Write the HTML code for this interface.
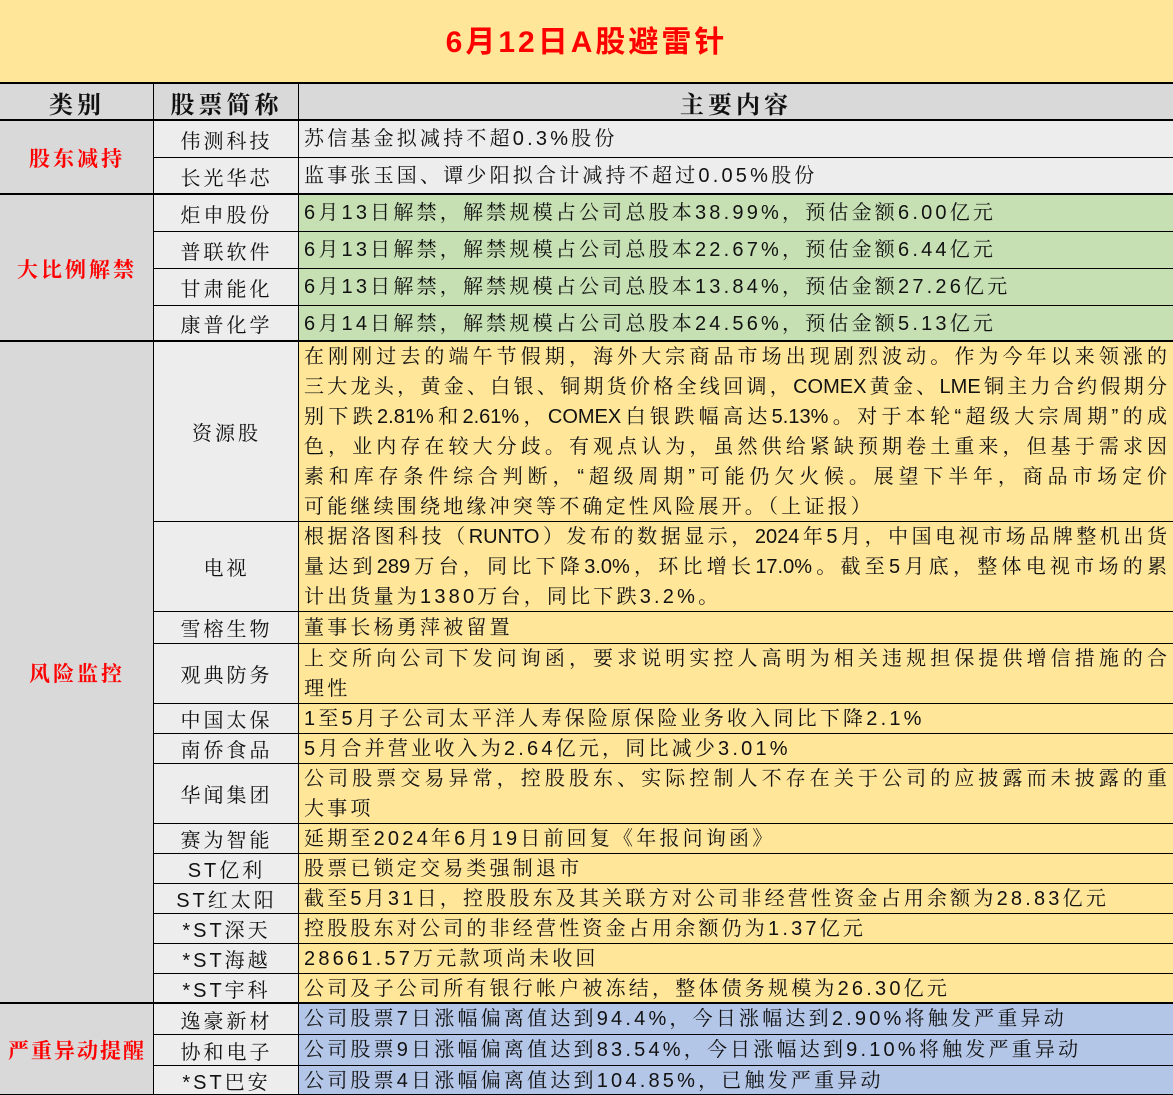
<!DOCTYPE html>
<html><head><meta charset="utf-8"><style>
body{margin:0;width:1173px;height:1095px;position:relative;background:#fff;font-family:"Liberation Sans","Noto Serif CJK SC","Noto Sans CJK SC",sans-serif;color:#111;overflow:hidden}
.c{position:absolute;box-sizing:border-box;border-left:1px solid #000;border-top:1px solid #000;overflow:hidden}
.k{border-top:2px solid #000}
.t{position:absolute;left:0;top:0;width:1173px;height:83px;background:#FFE699;text-align:center;line-height:86px;font-size:30px;font-weight:bold;color:#f00;letter-spacing:3px;font-family:"Liberation Sans","Noto Sans CJK SC",sans-serif}
.h{background:#D9D9D9;font-weight:bold;font-size:24px;text-align:center;letter-spacing:4px;display:flex;align-items:center;justify-content:center}
.cat{background:#D9D9D9;color:#f00;font-weight:bold;font-size:21px;letter-spacing:3px;display:flex;align-items:center;justify-content:center;border-top:2px solid #000}
.nm{background:#EDEDED;font-size:20px;letter-spacing:3px;display:flex;align-items:center;justify-content:center}
.ct{font-size:20px;letter-spacing:3.2px;padding-left:5px;padding-right:6px;display:flex;flex-direction:column;justify-content:center;line-height:30px;white-space:nowrap}
.j{text-align:justify;text-align-last:justify;letter-spacing:0}
.g{background:#EDEDED}.gr{background:#C6E0B4}.y{background:#FFE699}.b{background:#B4C6E7}
.bot{position:absolute;left:0;top:1094px;width:1173px;height:1px;background:#000}
</style></head><body>
<div class="t">6月12日A股避雷针</div>
<div class="c h k" style="left:0;top:82px;width:154px;height:39px;border-left:0">类别</div>
<div class="c h k" style="left:153px;top:82px;width:146px;height:39px">股票简称</div>
<div class="c h k" style="left:298px;top:82px;width:875px;height:39px">主要内容</div>

<div class="c cat" style="left:0;top:119px;width:154px;height:76px;border-left:0">股东减持</div>
<div class="c cat" style="left:0;top:193px;width:154px;height:149px;border-left:0">大比例解禁</div>
<div class="c cat" style="left:0;top:340px;width:154px;height:664px;border-left:0">风险监控</div>
<div class="c cat" style="left:0;top:1002px;width:154px;height:93px;letter-spacing:2px;font-size:21px;border-left:0">严重异动提醒</div>

<div class="c nm k" style="left:153px;top:119px;width:146px;height:38px">伟测科技</div>
<div class="c ct g k" style="left:298px;top:119px;width:875px;height:38px">苏信基金拟减持不超0.3%股份</div>
<div class="c nm" style="left:153px;top:157px;width:146px;height:37px">长光华芯</div>
<div class="c ct g" style="left:298px;top:157px;width:875px;height:37px">监事张玉国、谭少阳拟合计减持不超过0.05%股份</div>

<div class="c nm k" style="left:153px;top:193px;width:146px;height:38px">炬申股份</div>
<div class="c ct gr k" style="left:298px;top:193px;width:875px;height:38px">6月13日解禁，解禁规模占公司总股本38.99%，预估金额6.00亿元</div>
<div class="c nm" style="left:153px;top:231px;width:146px;height:37px">普联软件</div>
<div class="c ct gr" style="left:298px;top:231px;width:875px;height:37px">6月13日解禁，解禁规模占公司总股本22.67%，预估金额6.44亿元</div>
<div class="c nm" style="left:153px;top:268px;width:146px;height:37px">甘肃能化</div>
<div class="c ct gr" style="left:298px;top:268px;width:875px;height:37px">6月13日解禁，解禁规模占公司总股本13.84%，预估金额27.26亿元</div>
<div class="c nm" style="left:153px;top:305px;width:146px;height:36px">康普化学</div>
<div class="c ct gr" style="left:298px;top:305px;width:875px;height:36px">6月14日解禁，解禁规模占公司总股本24.56%，预估金额5.13亿元</div>

<div class="c nm k" style="left:153px;top:340px;width:146px;height:181px">资源股</div>
<div class="c ct y k" style="left:298px;top:340px;width:875px;height:181px">
<div class="j">在刚刚过去的端午节假期，海外大宗商品市场出现剧烈波动。作为今年以来领涨的</div>
<div class="j">三大龙头，黄金、白银、铜期货价格全线回调，COMEX黄金、LME铜主力合约假期分</div>
<div class="j">别下跌2.81%和2.61%，COMEX白银跌幅高达5.13%。对于本轮“超级大宗周期”的成</div>
<div class="j">色，业内存在较大分歧。有观点认为，虽然供给紧缺预期卷土重来，但基于需求因</div>
<div class="j">素和库存条件综合判断，“超级周期”可能仍欠火候。展望下半年，商品市场定价</div>
<div>可能继续围绕地缘冲突等不确定性风险展开。（上证报）</div></div>
<div class="c nm" style="left:153px;top:521px;width:146px;height:90px">电视</div>
<div class="c ct y" style="left:298px;top:521px;width:875px;height:90px">
<div class="j">根据洛图科技（RUNTO）发布的数据显示，2024年5月，中国电视市场品牌整机出货</div>
<div class="j">量达到289万台，同比下降3.0%，环比增长17.0%。截至5月底，整体电视市场的累</div>
<div>计出货量为1380万台，同比下跌3.2%。</div></div>
<div class="c nm" style="left:153px;top:611px;width:146px;height:32px">雪榕生物</div>
<div class="c ct y" style="left:298px;top:611px;width:875px;height:32px">董事长杨勇萍被留置</div>
<div class="c nm" style="left:153px;top:643px;width:146px;height:60px">观典防务</div>
<div class="c ct y" style="left:298px;top:643px;width:875px;height:60px">
<div class="j">上交所向公司下发问询函，要求说明实控人高明为相关违规担保提供增信措施的合</div><div>理性</div></div>
<div class="c nm" style="left:153px;top:703px;width:146px;height:30px">中国太保</div>
<div class="c ct y" style="left:298px;top:703px;width:875px;height:30px">1至5月子公司太平洋人寿保险原保险业务收入同比下降2.1%</div>
<div class="c nm" style="left:153px;top:733px;width:146px;height:30px">南侨食品</div>
<div class="c ct y" style="left:298px;top:733px;width:875px;height:30px">5月合并营业收入为2.64亿元，同比减少3.01%</div>
<div class="c nm" style="left:153px;top:763px;width:146px;height:60px">华闻集团</div>
<div class="c ct y" style="left:298px;top:763px;width:875px;height:60px">
<div class="j">公司股票交易异常，控股股东、实际控制人不存在关于公司的应披露而未披露的重</div><div>大事项</div></div>
<div class="c nm" style="left:153px;top:823px;width:146px;height:30px">赛为智能</div>
<div class="c ct y" style="left:298px;top:823px;width:875px;height:30px">延期至2024年6月19日前回复《年报问询函》</div>
<div class="c nm" style="left:153px;top:853px;width:146px;height:30px">ST亿利</div>
<div class="c ct y" style="left:298px;top:853px;width:875px;height:30px">股票已锁定交易类强制退市</div>
<div class="c nm" style="left:153px;top:883px;width:146px;height:30px">ST红太阳</div>
<div class="c ct y" style="left:298px;top:883px;width:875px;height:30px">截至5月31日，控股股东及其关联方对公司非经营性资金占用余额为28.83亿元</div>
<div class="c nm" style="left:153px;top:913px;width:146px;height:30px">*ST深天</div>
<div class="c ct y" style="left:298px;top:913px;width:875px;height:30px">控股股东对公司的非经营性资金占用余额仍为1.37亿元</div>
<div class="c nm" style="left:153px;top:943px;width:146px;height:30px">*ST海越</div>
<div class="c ct y" style="left:298px;top:943px;width:875px;height:30px">28661.57万元款项尚未收回</div>
<div class="c nm" style="left:153px;top:973px;width:146px;height:30px">*ST宇科</div>
<div class="c ct y" style="left:298px;top:973px;width:875px;height:30px">公司及子公司所有银行帐户被冻结，整体债务规模为26.30亿元</div>

<div class="c nm k" style="left:153px;top:1002px;width:146px;height:32px">逸豪新材</div>
<div class="c ct b k" style="left:298px;top:1002px;width:875px;height:32px">公司股票7日涨幅偏离值达到94.4%，今日涨幅达到2.90%将触发严重异动</div>
<div class="c nm" style="left:153px;top:1034px;width:146px;height:31px">协和电子</div>
<div class="c ct b" style="left:298px;top:1034px;width:875px;height:31px">公司股票9日涨幅偏离值达到83.54%，今日涨幅达到9.10%将触发严重异动</div>
<div class="c nm" style="left:153px;top:1065px;width:146px;height:30px">*ST巴安</div>
<div class="c ct b" style="left:298px;top:1065px;width:875px;height:30px">公司股票4日涨幅偏离值达到104.85%，已触发严重异动</div>
<div class="bot"></div>
</body></html>
